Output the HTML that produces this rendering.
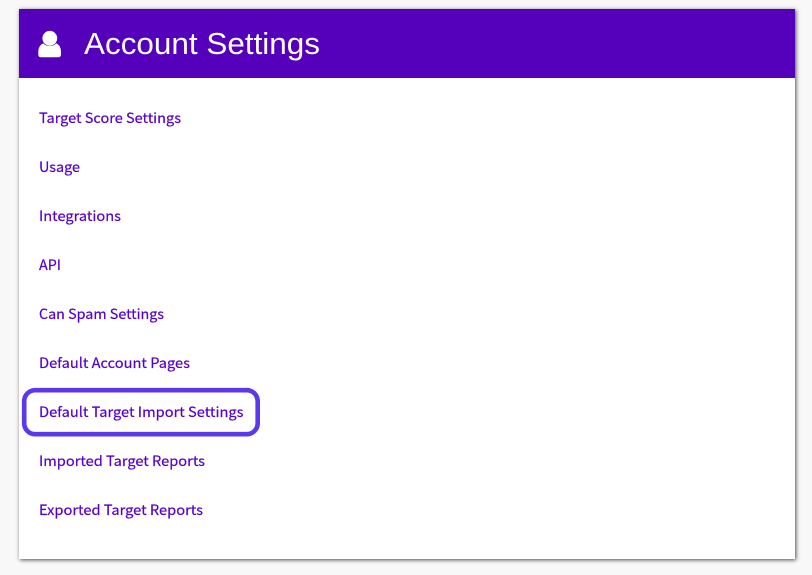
<!DOCTYPE html>
<html>
<head>
<meta charset="utf-8">
<style>
html,body{margin:0;padding:0;width:812px;height:575px;overflow:hidden;background:#f8f8f8}
.panel{position:absolute;left:19px;top:9px;width:776px;height:550px;background:#fff;box-shadow:1px 1px 4px rgba(0,0,0,.7)}
.head{position:absolute;left:0;top:0;width:776px;height:69px;background:#5500bb}
svg{position:absolute;left:0;top:0}
.l{font-family:"Noto Sans CJK SC","Liberation Sans",sans-serif;font-size:14px;font-weight:400;fill:#5500cc;stroke:#5500cc;stroke-width:.2px}
.t{font-family:"Liberation Sans",sans-serif;font-size:30.5px;fill:#fff}
</style>
</head>
<body>
<div class="panel"><div class="head"></div></div>
<svg width="812" height="575" viewBox="0 0 812 575">
<circle cx="49.8" cy="38.300" r="7.400" fill="#fff"/>
<path d="M43.500 43.200C45 46.800 54.500 46.800 56 43.200C59.500 44.500 61 48 61 52V54.500C61 56.500 59.800 57.300 58 57.300H41.500C39.500 57.300 38.300 56.500 38.300 54.500V52C38.300 48 40 44.500 43.500 43.200Z" fill="#fff"/>
<text class="t" x="84" y="54" textLength="236" lengthAdjust="spacingAndGlyphs">Account Settings</text>
<text class="l" x="39" y="123" textLength="142" lengthAdjust="spacingAndGlyphs">Target Score Settings</text>
<text class="l" x="39" y="172" textLength="41" lengthAdjust="spacingAndGlyphs">Usage</text>
<text class="l" x="39" y="221" textLength="82" lengthAdjust="spacingAndGlyphs">Integrations</text>
<text class="l" x="39" y="270" textLength="22" lengthAdjust="spacingAndGlyphs">API</text>
<text class="l" x="39" y="319" textLength="125" lengthAdjust="spacingAndGlyphs">Can Spam Settings</text>
<text class="l" x="39" y="368" textLength="151" lengthAdjust="spacingAndGlyphs">Default Account Pages</text>
<text class="l" x="39" y="417" textLength="204.500" lengthAdjust="spacingAndGlyphs">Default Target Import Settings</text>
<text class="l" x="39" y="466" textLength="166" lengthAdjust="spacingAndGlyphs">Imported Target Reports</text>
<text class="l" x="39" y="515" textLength="164" lengthAdjust="spacingAndGlyphs">Exported Target Reports</text>
<rect x="24.200" y="390.200" width="233.500" height="44" rx="11" ry="11" fill="none" stroke="#5a38ee" stroke-width="4.600"/>
</svg>
</body>
</html>
